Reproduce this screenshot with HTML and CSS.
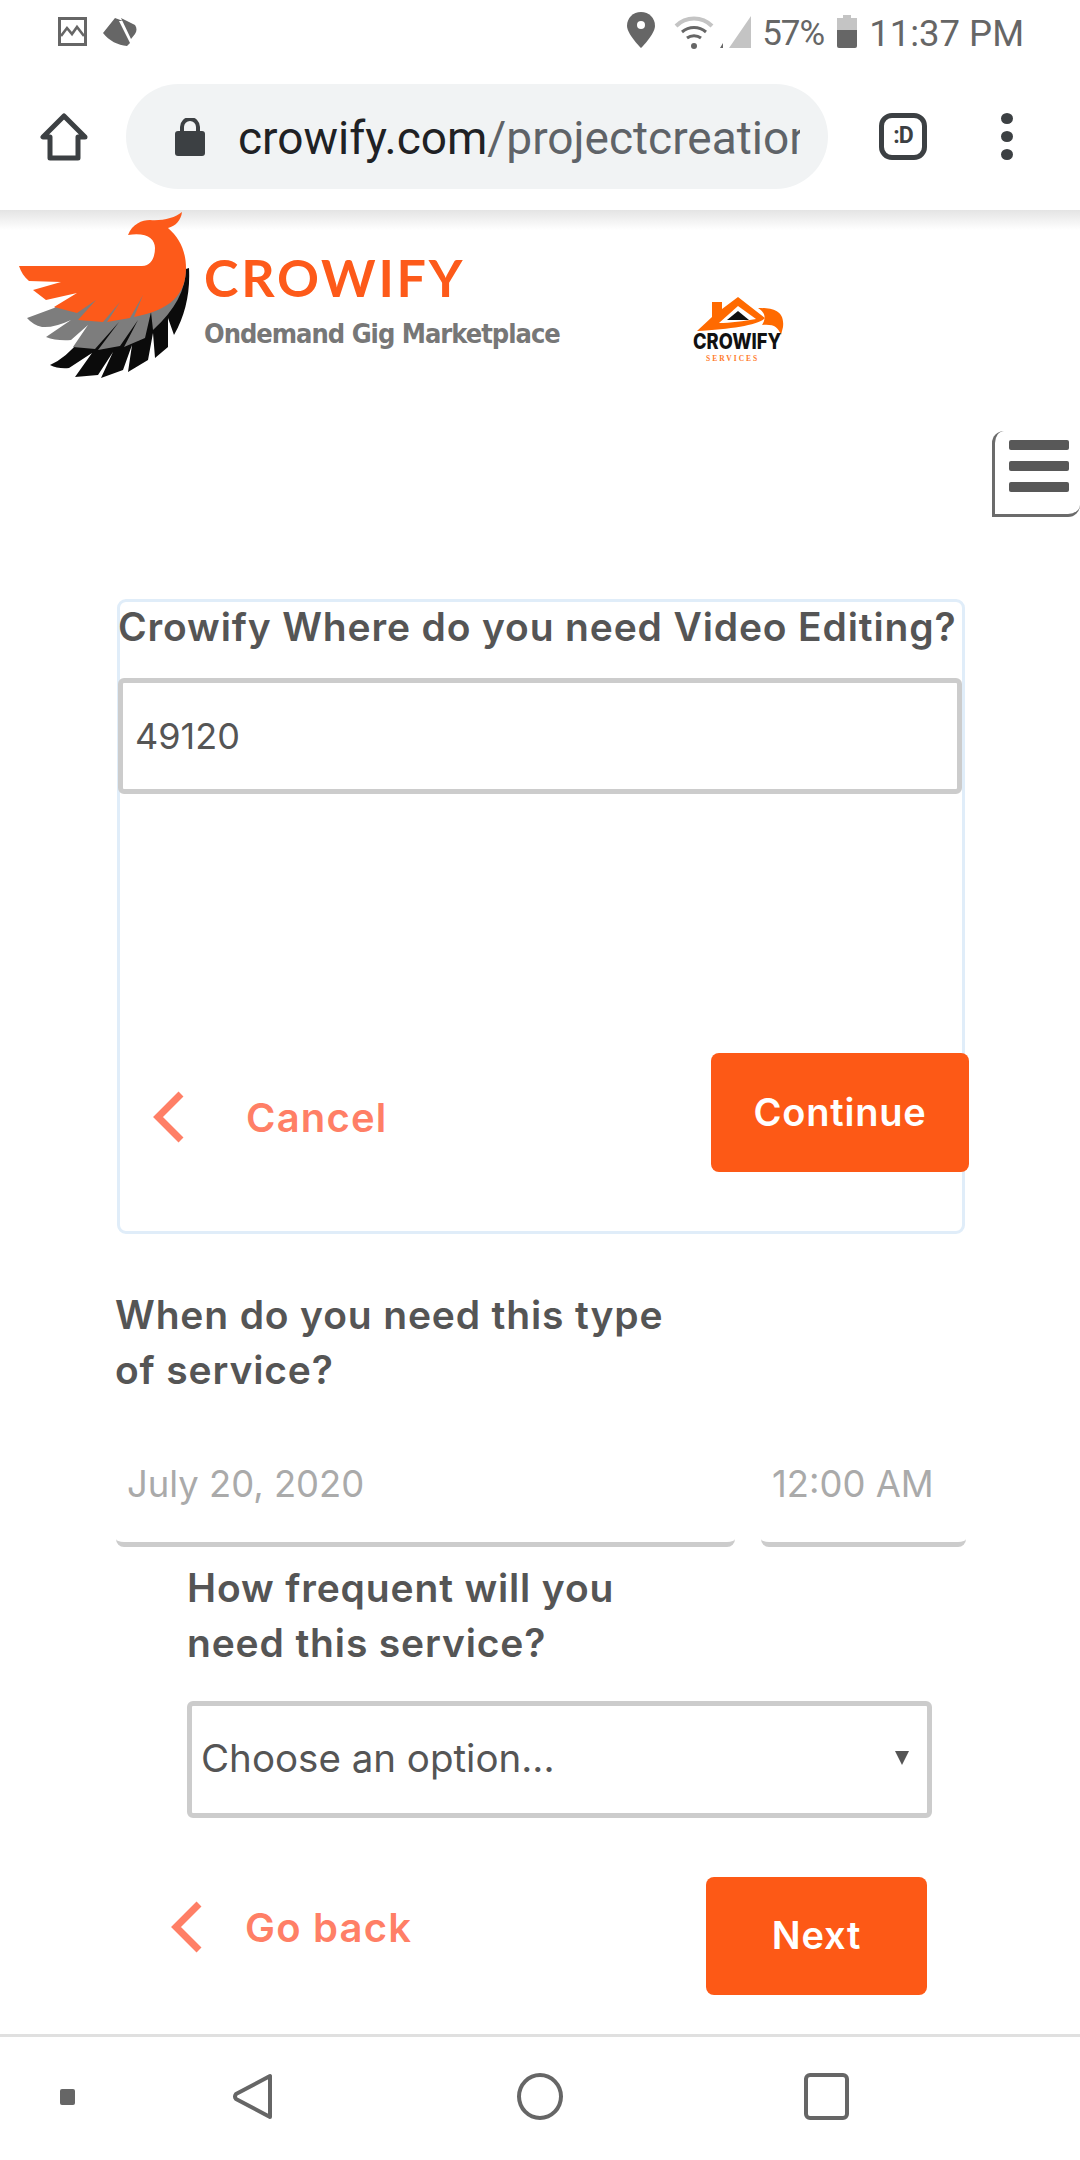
FILE: index.html
```html
<!DOCTYPE html>
<html lang="en">
<head>
    <meta charset="UTF-8">
    <meta name="viewport" content="width=device-width, initial-scale=1.0">
    <title>Crowify - Project Creation</title>
    <link rel="stylesheet" href="styles.css">
</head>
<body>
    <div class="page">
        <!-- Android status bar -->
        <div class="status-bar">
            <div class="status-left">
                <svg class="ic-picture" viewBox="0 0 29 29"><rect x="1.5" y="1.5" width="26" height="26" fill="none" stroke="#666" stroke-width="3"/><path d="M3 19l6-8 5 6 5-7 7 9" fill="none" stroke="#666" stroke-width="2.6"/></svg>
                <svg class="ic-eye" viewBox="0 0 35 30"><path d="M1 16L13 1l8 3-4 0 11 22-3 3C16 28 7 24 1 16zM19 1l14 7c2 3 2 6 0 9l-4 5z" fill="#666"/></svg>
            </div>
            <div class="status-right">
                <svg class="ic-pin" viewBox="0 0 28 36"><path d="M14 0C6 0 0 6 0 14c0 8 14 22 14 22s14-14 14-22C28 6 22 0 14 0z" fill="#666"/><circle cx="14" cy="13" r="4" fill="#fff"/></svg>
                <svg class="ic-wifi" viewBox="0 0 40 34"><path d="M2 11C12 1 28 1 38 11" fill="none" stroke="#c4c4c4" stroke-width="4"/><path d="M8 17c7-6 17-6 24 0" fill="none" stroke="#666" stroke-width="3"/><path d="M13 23c4-3 10-3 14 0" fill="none" stroke="#666" stroke-width="3"/><circle cx="20" cy="31" r="3" fill="#666"/></svg>
                <svg class="ic-signal" viewBox="0 0 31 32"><path d="M31 0v32H9z" fill="#c4c4c4"/><path d="M0 32l3-5v5z" fill="#666"/></svg>
                <span class="status-pct">57%</span>
                <svg class="ic-battery" viewBox="0 0 20 33"><path d="M6 0h8v3h6v13H0V3h6z" fill="#c4c4c4"/><path d="M0 15h20v16a2 2 0 0 1-2 2H2a2 2 0 0 1-2-2z" fill="#666"/></svg>
                <span class="status-time">11:37 PM</span>
            </div>
        </div>

        <!-- Chrome toolbar -->
        <div class="toolbar">
            <svg class="ic-home" viewBox="0 0 48 48"><path d="M24 3L3 24h7v21h28V24h7z" fill="none" stroke="#3c4043" stroke-width="5" stroke-linejoin="round"/></svg>
            <div class="omnibox">
                <svg class="ic-lock" viewBox="0 0 30 38"><path d="M7 15V9a8 8 0 0 1 16 0v6" fill="none" stroke="#3c4043" stroke-width="4"/><rect y="13" width="30" height="25" rx="3" fill="#3c4043"/></svg>
                <div class="url"><span class="url-host">crowify.com</span>/projectcreation</div>
            </div>
            <div class="tab-count">:D</div>
            <div class="dots"><span></span><span></span><span></span></div>
        </div>

        <main class="content">
            <div class="brand-row">
                <div class="brand">
                    <svg class="bird" viewBox="0 0 190 170">
                        <path d="M189 58Q191 95 174 125L168 108 168 137 155 148 153 123 148 150 128 162 132 135 123 160 101 168 113 142 98 165 75 167 92 143 69 158Q58 159 50 155 66 148 80 130L120 80z" fill="#0b0b0b"/>
                        <path d="M186 58Q186 90 153 120L151 102 145 128 124 137 138 110 120 136 98 140 119 112 95 139 73 137 88 115 71 130Q56 131 46 127L71 110Q54 118 42 117 33 115 27 108L54 98 100 70z" fill="#7d7d7d"/>
                        <path d="M128 25C132 14 142 10 150 10 162 11 175 8 182 2 181 10 176 16 168 18 180 28 186 42 186 58 186 85 170 100 134 107L143 85 130 108 107 112 120 92 103 112 78 110 96 90 77 103 54 97 77 83 46 90 33 80 61 72 29 71C24 67 21 62 19 56H142C152 56 155 46 155 38 155 29 147 22 128 25z" fill="#fd5a1a"/>
                    </svg>
                    <div class="brand-text">
                        <div class="brand-name">CROWIFY</div>
                        <div class="brand-tag">Ondemand Gig Marketplace</div>
                    </div>
                </div>
                <svg class="services-logo" viewBox="0 0 94 66">
                    <path d="M5 34L20 20V5h10v7L46 0 73 21C67 28 40 32 5 34z" fill="#ff6a00"/>
                    <path d="M46 9L27 26C38 26 52 24 64 22z" fill="#fff"/>
                    <path d="M46 14L35 23H57z" fill="#111"/>
                    <path d="M66 11C80 11 93 13 91 30L89 38C86 30 82 27 70 28 74 22 74 16 66 11z" fill="#ff6a00"/>
                    <text class="services-name" transform="translate(1 52) scale(.87 1)">CROWIFY</text>
                    <text class="services-sub" x="14" y="63.5">SERVICES</text>
                </svg>
            </div>

            <div class="menu-row">
                <div class="menu-btn"><span></span><span></span><span></span></div>
            </div>

            <div class="card">
                <h2 class="question card-title">Crowify Where do you need Video Editing?</h2>
                <div class="text-input">49120</div>
                <div class="card-actions">
                    <a class="back-link cancel">
                        <svg class="chevron" viewBox="0 0 32 52"><path d="M28 3L5 26l23 23" fill="none" stroke="#ff7f66" stroke-width="7"/></svg>
                        <span>Cancel</span>
                    </a>
                    <button class="btn-primary btn-continue">Continue</button>
                </div>
            </div>

            <h2 class="question when">When do you need this type of service?</h2>
            <div class="date-row">
                <div class="date-field">July 20, 2020</div>
                <div class="date-field time-field">12:00 AM</div>
            </div>

            <div class="frequency">
                <h2 class="question freq-title">How frequent will you need this service?</h2>
                <div class="select-box">
                    <span>Choose an option...</span>
                    <i class="caret"></i>
                </div>
            </div>

            <div class="form-actions">
                <a class="back-link goback">
                    <svg class="chevron" viewBox="0 0 32 52"><path d="M28 3L5 26l23 23" fill="none" stroke="#ff7f66" stroke-width="7"/></svg>
                    <span>Go back</span>
                </a>
                <button class="btn-primary btn-next">Next</button>
            </div>
        </main>

        <!-- Android nav bar -->
        <div class="nav-bar">
            <span class="nav-dot"></span>
            <svg class="nav-icon" viewBox="0 0 41 47"><path d="M38 3v41L4 26a4 4 0 0 1 0-5z" fill="none" stroke="#666" stroke-width="4" stroke-linejoin="round"/></svg>
            <span class="nav-circle"></span>
            <span class="nav-square"></span>
        </div>
    </div>
</body>
</html>
```

FILE: styles.css
```css
/* General styles */
* {
    box-sizing: border-box;
}

body {
    margin: 0;
    background-color: #fff;
    font-family: Inter, "Open Sans", sans-serif;
    color: #555;
}

.page {
    display: flex;
    flex-direction: column;
    width: 1080px;
    height: 2160px;
    overflow: hidden;
}

/* Status bar */
.status-bar {
    display: flex;
    justify-content: space-between;
    height: 66px;
    padding: 12px 56px 0 58px;
    font-family: Roboto, sans-serif;
    color: #666;
    flex-shrink: 0;
}

.status-left,
.status-right {
    display: flex;
    align-items: flex-start;
}

.ic-picture { width: 29px; height: 29px; margin-top: 5px; }
.ic-eye { width: 35px; height: 30px; margin: 5px 0 0 15px; }
.ic-pin { width: 28px; height: 36px; }
.ic-wifi { width: 40px; height: 34px; margin: 3px 0 0 19px; }
.ic-signal { width: 31px; height: 32px; margin: 4px 0 0 6px; }
.ic-battery { width: 20px; height: 33px; margin: 3px 0 0 13px; }

.status-pct {
    margin-left: 11px;
    font-size: 35px;
    line-height: 44px;
    letter-spacing: -1px;
}

.status-time {
    margin-left: 12px;
    font-size: 36.5px;
    line-height: 44px;
}

/* Browser toolbar */
.toolbar {
    display: flex;
    align-items: center;
    height: 144px;
    padding: 0 0 3px 40px;
    background: #fff;
    flex-shrink: 0;
}

.ic-home { width: 48px; height: 48px; }

.omnibox {
    display: flex;
    align-items: center;
    width: 702px;
    height: 105px;
    margin-left: 38px;
    padding: 0 28px 0 49px;
    background: #f1f3f4;
    border-radius: 53px;
}

.ic-lock { width: 30px; height: 38px; flex-shrink: 0; }

.url {
    margin-left: 33px;
    padding-top: 2px;
    overflow: hidden;
    white-space: nowrap;
    font-family: Roboto, sans-serif;
    font-size: 46px;
    color: #5f6368;
}

.url-host { color: #202124; }

.tab-count {
    width: 48px;
    height: 47px;
    margin-left: 51px;
    border: 5px solid #3c4043;
    border-radius: 13px;
    font-family: Roboto, sans-serif;
    font-size: 23px;
    font-weight: 700;
    line-height: 36px;
    letter-spacing: -1px;
    text-align: center;
    color: #3c4043;
}

.dots {
    display: flex;
    flex-direction: column;
    gap: 7px;
    margin-left: 74px;
}

.dots span {
    width: 12px;
    height: 11px;
    background: #3c4043;
    border-radius: 50%;
}

/* Logos */
.content {
    flex: 1;
}

.brand-row {
    display: flex;
    height: 168px;
    background: linear-gradient(#e4e4e4, #fff 20px);
}

.brand {
    display: flex;
    width: 692px;
    flex-shrink: 0;
}

.bird {
    width: 190px;
    height: 170px;
    flex-shrink: 0;
}

.brand-text {
    margin: 40px 0 0 14px;
}

.brand-name {
    font-family: Lato, sans-serif;
    font-weight: 700;
    font-size: 52px;
    line-height: 54px;
    letter-spacing: 2.8px;
    color: #fd5a1a;
}

.brand-tag {
    margin-top: 13px;
    font-family: "DejaVu Sans Condensed", "DejaVu Sans", sans-serif;
    font-weight: 700;
    font-size: 27px;
    line-height: 34px;
    letter-spacing: -1px;
    white-space: nowrap;
    color: #777;
}

.services-logo {
    width: 94px;
    height: 66px;
    margin-top: 87px;
}

.services-name {
    font-family: Inter, sans-serif;
    font-weight: 800;
    font-size: 21px;
    fill: #111;
}

.services-sub {
    font-family: "Liberation Serif", serif;
    font-weight: 700;
    font-size: 7.5px;
    letter-spacing: 2px;
    fill: #ff7a2a;
}

/* Hamburger */
.menu-row {
    display: flex;
    justify-content: flex-end;
    margin-top: 53px;
}

.menu-btn {
    display: flex;
    flex-direction: column;
    gap: 11px;
    width: 88px;
    height: 86px;
    padding: 9px 11px 0 14px;
    border-left: 3px solid #6b6b6b;
    border-bottom: 3px solid #6b6b6b;
    border-radius: 12px 0 12px 0;
}

.menu-btn span {
    height: 10px;
    background: #585858;
    border-radius: 2px;
}

/* Form card */
.card {
    width: 848px;
    margin: 82px 0 0 117px;
    padding-bottom: 59px;
    border: 3px solid #e0edf9;
    border-radius: 9px;
}

.question {
    margin: 0;
    padding-bottom: 1px;
    font-size: 39px;
    font-weight: 600;
    line-height: 55px;
    letter-spacing: 0.85px;
    color: #555;
}

.card-title {
    margin: -3px -6px 0 -2px;
    white-space: nowrap;
}

.text-input {
    height: 116px;
    margin: 23px 0 0 -2px;
    padding-left: 12px;
    border: 5px solid #ccc;
    border-radius: 6px;
    font-size: 36px;
    line-height: 106px;
}

.card-actions {
    display: flex;
    justify-content: space-between;
    align-items: flex-start;
    margin: 259px -7px 0 33px;
}

.back-link {
    display: flex;
    align-items: center;
    font-size: 40px;
    font-weight: 600;
    letter-spacing: 1.2px;
    color: #ff7f66;
}

.chevron {
    width: 32px;
    height: 52px;
    flex-shrink: 0;
}

.cancel { gap: 61px; margin-top: 38px; }
.goback { gap: 42px; margin-top: 24px; }

.btn-primary {
    border: none;
    padding: 0 0 2px;
    background-color: #fd5916;
    border-radius: 8px;
    font-family: inherit;
    font-weight: 600;
    font-size: 38px;
    letter-spacing: 0.8px;
    color: #fff;
}

.btn-continue { width: 258px; height: 119px; }
.btn-next { width: 221px; height: 118px; }

/* Date and time */
.when {
    width: 570px;
    margin: 53px 0 0 115px;
}

.date-row {
    display: flex;
    gap: 26px;
    margin: 57px 0 0 116px;
}

.date-field {
    width: 619px;
    height: 92px;
    padding-left: 11px;
    border-bottom: 5px solid #ccc;
    border-radius: 8px;
    font-size: 36.4px;
    line-height: 58px;
    color: #aaa;
}

.time-field {
    width: 205px;
}

/* Frequency */
.frequency {
    width: 745px;
    margin: 13px 0 0 187px;
}

.freq-title {
    width: 470px;
}

.select-box {
    display: flex;
    justify-content: space-between;
    align-items: center;
    height: 117px;
    margin-top: 30px;
    padding: 0 18px 3px 9px;
    border: 5px solid #ccc;
    border-radius: 6px;
    font-size: 38.5px;
}

.caret {
    width: 0;
    height: 0;
    border-left: 7px solid transparent;
    border-right: 7px solid transparent;
    border-top: 14px solid #555;
}

.form-actions {
    display: flex;
    justify-content: space-between;
    align-items: flex-start;
    width: 756px;
    margin: 59px 0 0 171px;
}

/* Nav bar */
.nav-bar {
    position: relative;
    height: 126px;
    border-top: 3px solid #e0e0e0;
    flex-shrink: 0;
}

.nav-dot,
.nav-icon,
.nav-circle,
.nav-square {
    position: absolute;
}

.nav-dot {
    left: 60px;
    top: 52px;
    width: 15px;
    height: 16px;
    background: #666;
    border-radius: 2px;
}

.nav-icon {
    left: 232px;
    top: 36px;
    width: 41px;
    height: 47px;
}

.nav-circle {
    left: 517px;
    top: 36px;
    width: 46px;
    height: 47px;
    border: 4px solid #666;
    border-radius: 50%;
}

.nav-square {
    left: 804px;
    top: 36px;
    width: 45px;
    height: 47px;
    border: 4px solid #666;
    border-radius: 6px;
}
```
